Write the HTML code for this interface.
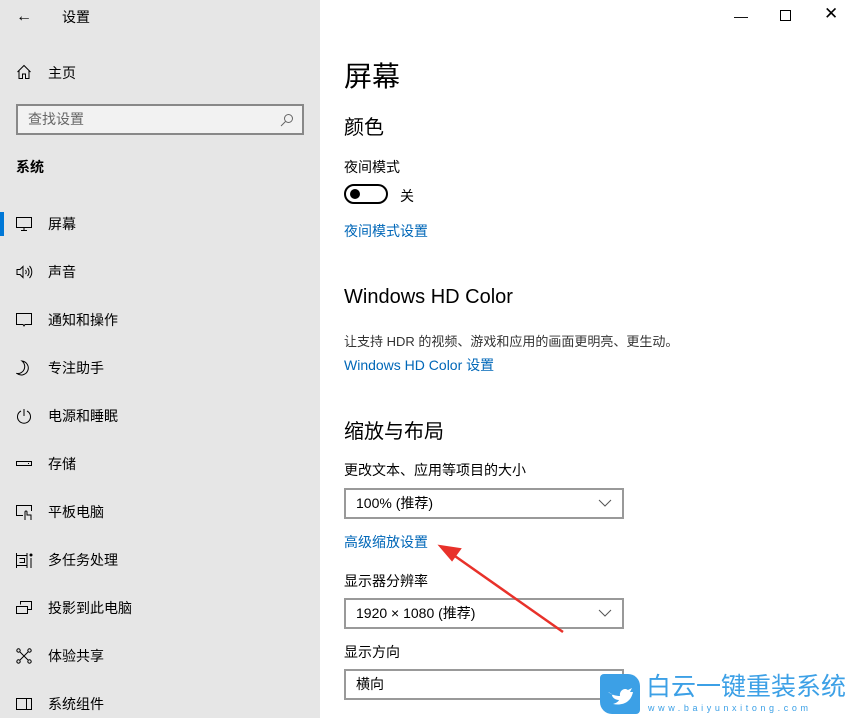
<!DOCTYPE html><html><head><meta charset="utf-8"><style>
*{margin:0;padding:0;box-sizing:border-box}
body{width:855px;height:718px;overflow:hidden;position:relative;font-family:"Liberation Sans","Noto Sans CJK SC",sans-serif;color:#000;background:#fff}
.side{position:absolute;left:0;top:0;width:320px;height:718px;background:#e6e6e6}
.a{position:absolute;white-space:nowrap}
.t14{font-size:14px}
.item{position:absolute;left:48px;font-size:14px;line-height:20px}
.ic{position:absolute;left:16px}
.link{color:#0067b8;font-size:14px}
.dd{position:absolute;left:344px;width:280px;height:31px;border:2px solid #999;font-size:14px;line-height:27px;padding-left:10px}
.dd svg{position:absolute;right:10px;top:9px}
</style></head><body>
<div class="side">
<div class="a" style="left:16px;top:8px;font-size:16px">&#8592;</div>
<div class="a t14" style="left:62px;top:7px">设置</div>
<svg class="ic" style="top:64px" width="16" height="16" viewBox="0 0 16 16" fill="none" stroke="#000"><path d="M1.5 8L8 1.5 14.5 8M3 6.5V14.5H6.5V10H9.5V14.5H13V6.5"/></svg>
<div class="item" style="top:63px">主页</div>
<div class="a" style="left:16px;top:104px;width:288px;height:31px;border:2px solid #888;background:#f2f2f2;font-size:14px;color:#666;line-height:27px;padding-left:10px">查找设置
<svg style="position:absolute;right:8px;top:7px" width="14" height="14" viewBox="0 0 14 14" fill="none" stroke="#666"><circle cx="8.5" cy="5.5" r="4"/><path d="M5.5 8.5L1 13"/></svg></div>
<div class="a" style="left:16px;top:157px;font-size:14px;font-weight:bold">系统</div>
<div class="a" style="left:0;top:212px;width:4px;height:24px;background:#0078d7"></div>
<svg class="ic" style="top:216px" width="16" height="16" viewBox="0 0 16 16" fill="none" stroke="#000"><rect x="0.5" y="1.5" width="15" height="10"/><path d="M8 11.5V14M5 14.5H11"/></svg>
<div class="item" style="top:214px">屏幕</div>
<svg class="ic" style="top:264px" width="18" height="16" viewBox="0 0 18 16" fill="none" stroke="#000"><path d="M1 5.5H4L7 2.5V13.5L4 10.5H1Z M9.5 6a3 3 0 0 1 0 4 M11.5 4a6 6 0 0 1 0 8 M13.5 2a9 9 0 0 1 0 12"/></svg>
<div class="item" style="top:262px">声音</div>
<svg class="ic" style="top:312px" width="16" height="17" viewBox="0 0 16 17" fill="none" stroke="#000"><path d="M0.5 1.5H15.5V12.5H9L8 14 7 12.5H0.5Z"/></svg>
<div class="item" style="top:310px">通知和操作</div>
<svg class="ic" style="top:360px" width="16" height="16" viewBox="0 0 16 16" fill="none" stroke="#000"><path d="M6 1a7 7 0 0 1-5 12.5A7 7 0 1 0 6 1Z"/></svg>
<div class="item" style="top:358px">专注助手</div>
<svg class="ic" style="top:408px" width="16" height="16" viewBox="0 0 16 16" fill="none" stroke="#000"><path d="M5 3a6.5 6.5 0 1 0 6 0M8 1V8"/></svg>
<div class="item" style="top:406px">电源和睡眠</div>
<svg class="ic" style="top:456px" width="16" height="16" viewBox="0 0 16 16" fill="none" stroke="#000"><rect x="0.5" y="5.5" width="15" height="4"/><path d="M12 7.5h1"/></svg>
<div class="item" style="top:454px">存储</div>
<svg class="ic" style="top:504px" width="17" height="17" viewBox="0 0 17 17" fill="none" stroke="#000"><path d="M7 11.5H0.5V1.5H15.5V7M9 16V8a1 1 0 0 1 2 0V11H15V16"/></svg>
<div class="item" style="top:502px">平板电脑</div>
<svg class="ic" style="top:552px" width="17" height="17" viewBox="0 0 17 17" fill="none" stroke="#000"><path d="M0.5 1V16M0.5 3.5H11.5M0.5 13.5H11.5M3.5 6.5H8.5V10.5H3.5M11 1V16M15 6V16"/><circle cx="15" cy="3" r="1" fill="#000"/></svg>
<div class="item" style="top:550px">多任务处理</div>
<svg class="ic" style="top:600px" width="17" height="16" viewBox="0 0 17 16" fill="none" stroke="#000"><path d="M4.5 4.5V1.5H15.5V9.5H11M0.5 6.5H11.5V13.5H0.5Z"/></svg>
<div class="item" style="top:598px">投影到此电脑</div>
<svg class="ic" style="top:648px" width="16" height="16" viewBox="0 0 16 16" fill="none" stroke="#000"><circle cx="2.5" cy="2.5" r="1.7"/><circle cx="13.5" cy="2.5" r="1.7"/><circle cx="2.5" cy="13.5" r="1.7"/><circle cx="13.5" cy="13.5" r="1.7"/><path d="M4 4L12 12M12 4L4 12"/></svg>
<div class="item" style="top:646px">体验共享</div>
<svg class="ic" style="top:697px" width="17" height="14" viewBox="0 0 17 14" fill="none" stroke="#000"><rect x="0.5" y="1.5" width="15" height="11"/><path d="M10.5 1.5V12.5"/></svg>
<div class="item" style="top:694px">系统组件</div>
</div>
<div class="a" style="left:734px;top:8px;font-size:14px">&#8212;</div>
<div class="a" style="left:780px;top:10px;width:11px;height:11px;border:1px solid #000"></div>
<div class="a" style="left:824px;top:4px;font-size:17px">&#10005;</div>
<div class="a" style="left:344px;top:55px;font-size:28px">屏幕</div>
<div class="a" style="left:344px;top:111px;font-size:20px">颜色</div>
<div class="a t14" style="left:344px;top:157px">夜间模式</div>
<div class="a" style="left:344px;top:184px;width:44px;height:20px;border:2px solid #000;border-radius:10px"><div style="position:absolute;left:4px;top:3px;width:10px;height:10px;border-radius:5px;background:#000"></div></div>
<div class="a t14" style="left:400px;top:186px">关</div>
<div class="a link" style="left:344px;top:221px">夜间模式设置</div>
<div class="a" style="left:344px;top:286px;font-size:20px">Windows HD Color</div>
<div class="a" style="left:344px;top:331px;font-size:13px;color:#333">让支持 HDR 的视频、游戏和应用的画面更明亮、更生动。</div>
<div class="a link" style="left:344px;top:355px">Windows HD Color 设置</div>
<div class="a" style="left:344px;top:415px;font-size:20px">缩放与布局</div>
<div class="a t14" style="left:344px;top:460px">更改文本、应用等项目的大小</div>
<div class="dd" style="top:488px">100% (推荐)<svg width="14" height="8" viewBox="0 0 14 8" fill="none" stroke="#555"><path d="M1 1L7 7 13 1"/></svg></div>
<div class="a link" style="left:344px;top:532px">高级缩放设置</div>
<div class="a t14" style="left:344px;top:571px">显示器分辨率</div>
<div class="dd" style="top:598px">1920 × 1080 (推荐)<svg width="14" height="8" viewBox="0 0 14 8" fill="none" stroke="#555"><path d="M1 1L7 7 13 1"/></svg></div>
<div class="a t14" style="left:344px;top:642px">显示方向</div>
<div class="dd" style="top:669px">横向</div>
<svg class="a" style="left:0;top:0" width="855" height="718"><path d="M563 632L452 554" stroke="#e8312a" stroke-width="2.5"/><path d="M440 546L460 549 452 560Z" fill="#e8312a" stroke="#e8312a" stroke-width="2"/></svg>
<div class="a" style="left:600px;top:674px;width:40px;height:40px;background:#3ca0e6;border-radius:4px 12px 4px 12px"></div>
<svg class="a" style="left:604px;top:680px" width="32" height="28" viewBox="0 0 32 28"><path d="M4 12c4 3 8 4 12 4-1-5 4-9 8-6l4-2-2 4 3 0c-2 10-10 14-20 12 3-1 5-2 6-4-4 0-7-3-7-5l2 0c-3-1-5-3-6-3z" fill="#fff"/></svg>
<div class="a" style="left:646px;top:673px;font-size:25px;color:#3ca0e6;line-height:28px">白云一键重装系统</div>
<div class="a" style="left:648px;top:703px;font-size:9px;color:#3ca0e6;letter-spacing:3.6px">www.baiyunxitong.com</div>
</body></html>
